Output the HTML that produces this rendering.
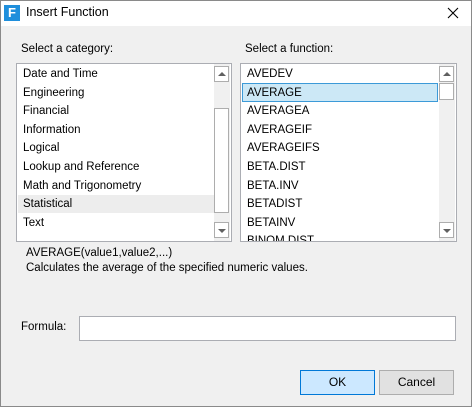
<!DOCTYPE html>
<html><head><style>
*{box-sizing:border-box;margin:0;padding:0}
body{width:472px;height:407px;background:#f0f0f0;font-family:"Liberation Sans",sans-serif;font-size:11.5px;color:#000;position:relative;overflow:hidden;box-shadow:inset 0 0 0 1px #8a8a8a}
.abs{position:absolute}
.title{left:1px;top:1px;width:470px;height:25px;background:#fff}
.list{background:#fff;border:1px solid #abadb3}
.item{position:absolute;left:6px;height:18px;line-height:18px;white-space:nowrap}
.sb{position:absolute;width:16px;background:#f0f0f0}
.btn{position:absolute;width:15px;height:16px;background:#fff;border:1px solid #adadad}
.thumb{position:absolute;width:15px;background:#fff;border:1px solid #adadad}
.up::after,.dn::after{content:"";position:absolute;left:3px;border-left:4px solid transparent;border-right:4px solid transparent}
.up::after{top:5px;border-bottom:4px solid #606060}
.dn::after{top:6px;border-top:4px solid #606060}
.b{position:absolute;height:25px;text-align:center;line-height:23px;font-size:12px}
</style></head><body>
<div class="abs title">
 <div class="abs" style="left:3px;top:4px;width:16px;height:16px;background:#1f8fdc;color:#fff;font-weight:bold;font-size:13px;line-height:16px;text-align:center">F</div>
 <div class="abs" style="left:25px;top:4px;font-size:12.5px">Insert Function</div>
 <svg class="abs" style="left:446px;top:6px" width="12" height="12" viewBox="0 0 12 12"><path d="M1 1L11 11M11 1L1 11" stroke="#000" stroke-width="1.1"/></svg>
</div>
<div class="abs" style="left:21px;top:43px">Select a category:</div>
<div class="abs" style="left:245px;top:43px">Select a function:</div>

<div class="abs list" style="left:16px;top:63px;width:216px;height:179px">
 <div class="abs" style="left:1px;top:131px;width:196px;height:18px;background:#ededed"></div>
 <div class="item" style="top:1px">Date and Time</div>
 <div class="item" style="top:20px">Engineering</div>
 <div class="item" style="top:38px">Financial</div>
 <div class="item" style="top:57px">Information</div>
 <div class="item" style="top:75px">Logical</div>
 <div class="item" style="top:94px">Lookup and Reference</div>
 <div class="item" style="top:113px">Math and Trigonometry</div>
 <div class="item" style="top:131px">Statistical</div>
 <div class="item" style="top:150px">Text</div>
 <div class="sb" style="left:197px;top:0;height:177px"></div>
 <div class="btn up" style="left:197px;top:2px"></div>
 <div class="thumb" style="left:197px;top:44px;height:105px"></div>
 <div class="btn dn" style="left:197px;top:158px"></div>
</div>

<div class="abs list" style="left:240px;top:63px;width:217px;height:179px">
 <div class="abs" style="left:1px;top:19px;width:196px;height:19px;background:#cce8f6;border:1px solid #3c9ad8"></div>
 <div class="item" style="top:1px">AVEDEV</div>
 <div class="item" style="top:20px">AVERAGE</div>
 <div class="item" style="top:38px">AVERAGEA</div>
 <div class="item" style="top:57px">AVERAGEIF</div>
 <div class="item" style="top:75px">AVERAGEIFS</div>
 <div class="item" style="top:94px">BETA.DIST</div>
 <div class="item" style="top:113px">BETA.INV</div>
 <div class="item" style="top:131px">BETADIST</div>
 <div class="item" style="top:150px">BETAINV</div>
 <div class="item" style="top:168px;height:9px;overflow:hidden;line-height:18px">BINOM.DIST</div>
 <div class="sb" style="left:198px;top:0;height:177px"></div>
 <div class="btn up" style="left:198px;top:2px"></div>
 <div class="thumb" style="left:198px;top:19px;height:17px"></div>
 <div class="btn dn" style="left:198px;top:158px"></div>
</div>

<div class="abs" style="left:26px;top:247px">AVERAGE(value1,value2,...)</div>
<div class="abs" style="left:26px;top:262px">Calculates the average of the specified numeric values.</div>
<div class="abs" style="left:21px;top:321px">Formula:</div>
<div class="abs" style="left:79px;top:316px;width:377px;height:25px;background:#fff;border:1px solid #abadb3"></div>
<div class="b" style="left:300px;top:370px;width:75px;background:#cce8ff;border:1px solid #0078d7">OK</div>
<div class="b" style="left:379px;top:370px;width:75px;background:#e1e1e1;border:1px solid #adadad">Cancel</div>
</body></html>
